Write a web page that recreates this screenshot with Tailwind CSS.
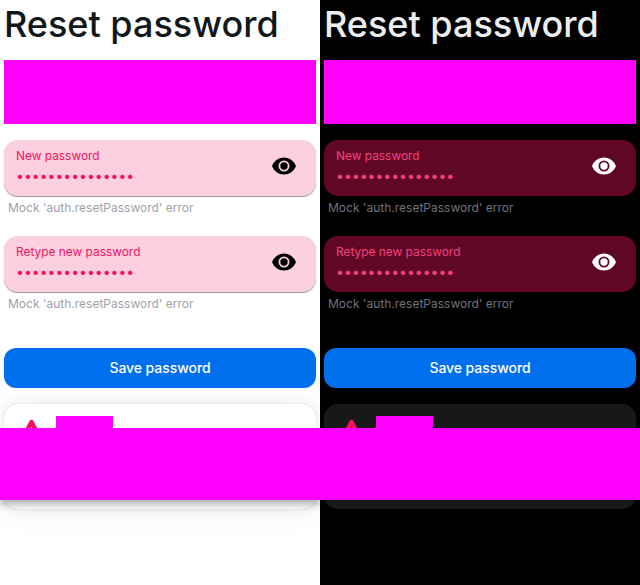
<!DOCTYPE html>
<html lang="en">
<head>
<meta charset="utf-8">
<title>Reset password</title>
<script src="https://cdn.jsdelivr.net/npm/@tailwindcss/browser@4"></script>
</head>
<body class="relative h-[585px] w-[640px] overflow-hidden font-['Inter',sans-serif] antialiased">
<svg class="hidden">
  <symbol id="eye" viewBox="0 0 24 24"><path d="M12 3.5C6.6 3.5 2 7 0 12c2 5 6.6 8.5 12 8.5s10-3.5 12-8.5c-2-5-6.6-8.5-12-8.5zM12 17.5a5.5 5.5 0 1 1 0-11 5.5 5.5 0 0 1 0 11zm0-9.2a3.7 3.7 0 1 0 0 7.4 3.7 3.7 0 0 0 0-7.4z"/></symbol>
  <symbol id="warning" viewBox="0 0 24 24"><path d="M11.5 4 3 20h17Z" fill="none" stroke="currentColor" stroke-width="4.4" stroke-linejoin="round"/></symbol>
</svg>
<main class="grid h-full grid-cols-2">
  <section class="flex flex-col overflow-hidden bg-white p-1 text-[#11181c]">
    <h1 class="h-10 text-4xl font-medium whitespace-nowrap">Reset password</h1>
    <div class="mt-4 h-16 shrink-0 bg-[#ff00ff]"></div>
    <div class="mt-4 flex h-14 shrink-0 items-center justify-between rounded-[14px] bg-[#fdd0df] pr-5 pl-3 text-[#f31260] shadow-[0_1px_1px_rgba(0,0,0,0.4)]">
      <div class="flex h-14 flex-col pt-2"><span class="text-[11.9px] leading-4">New password</span><span class="mt-0.5 text-sm leading-5">•••••••••••••••</span></div>
      <svg class="mb-1 size-6 fill-black"><use href="#eye"/></svg>
    </div>
    <p class="h-10 shrink-0 pt-1 pl-1 text-xs text-[#a1a1aa]">Mock 'auth.resetPassword' error</p>
    <div class="flex h-14 shrink-0 items-center justify-between rounded-[14px] bg-[#fdd0df] pr-5 pl-3 text-[#f31260] shadow-[0_1px_1px_rgba(0,0,0,0.4)]">
      <div class="flex h-14 flex-col pt-2"><span class="text-[11.9px] leading-4">Retype new password</span><span class="mt-0.5 text-sm leading-5">•••••••••••••••</span></div>
      <svg class="mb-1 size-6 fill-black"><use href="#eye"/></svg>
    </div>
    <p class="h-14 shrink-0 pt-1 pl-1 text-xs text-[#a1a1aa]">Mock 'auth.resetPassword' error</p>
    <button class="z-10 h-10 shrink-0 rounded-xl bg-[#006fee] text-sm font-medium tracking-[-0.06px] text-white">Save password</button>
    <div class="mt-4 flex h-[105px] shrink-0 items-start rounded-[14px] bg-white p-3 shadow-[0_0_15px_rgba(0,0,0,0.03),0_2px_30px_rgba(0,0,0,0.08),0_0_1px_rgba(0,0,0,0.3)]">
      <svg class="mt-0.5 ml-1 size-6 text-[#f31260]"><use href="#warning"/></svg>
      <div class="ml-3 h-6 w-[56.5px] bg-[#ff00ff]"></div>
    </div>
  </section>
  <section class="flex flex-col overflow-hidden bg-black p-1 text-[#ecedee]">
    <h1 class="h-10 text-4xl font-medium whitespace-nowrap">Reset password</h1>
    <div class="mt-4 h-16 shrink-0 bg-[#ff00ff]"></div>
    <div class="mt-4 flex h-14 shrink-0 items-center justify-between rounded-[14px] bg-[#610726] pr-5 pl-3 text-[#f54180]">
      <div class="flex h-14 flex-col pt-2"><span class="text-[11.9px] leading-4">New password</span><span class="mt-0.5 text-sm leading-5">•••••••••••••••</span></div>
      <svg class="mb-1 size-6 fill-white"><use href="#eye"/></svg>
    </div>
    <p class="h-10 shrink-0 pt-1 pl-1 text-xs text-[#71717a]">Mock 'auth.resetPassword' error</p>
    <div class="flex h-14 shrink-0 items-center justify-between rounded-[14px] bg-[#610726] pr-5 pl-3 text-[#f54180]">
      <div class="flex h-14 flex-col pt-2"><span class="text-[11.9px] leading-4">Retype new password</span><span class="mt-0.5 text-sm leading-5">•••••••••••••••</span></div>
      <svg class="mb-1 size-6 fill-white"><use href="#eye"/></svg>
    </div>
    <p class="h-14 shrink-0 pt-1 pl-1 text-xs text-[#71717a]">Mock 'auth.resetPassword' error</p>
    <button class="h-10 shrink-0 rounded-xl bg-[#006fee] text-sm font-medium tracking-[-0.06px] text-white">Save password</button>
    <div class="mt-4 flex h-[105px] shrink-0 items-start rounded-[14px] bg-[#18181b] p-3">
      <svg class="mt-0.5 ml-1 size-6 text-[#f31260]"><use href="#warning"/></svg>
      <div class="ml-3 h-6 w-[56.5px] bg-[#ff00ff]"></div>
    </div>
  </section>
</main>
<div class="absolute top-[428px] left-0 h-[72px] w-1/2 bg-[#ff00ff] shadow-[0_4px_8px_rgba(0,0,0,0.35)] [clip-path:inset(0_0_-20px_0)]"></div>
<div class="absolute top-[428px] left-1/2 h-[72px] w-1/2 bg-[#ff00ff]"></div>
</body>
</html>
